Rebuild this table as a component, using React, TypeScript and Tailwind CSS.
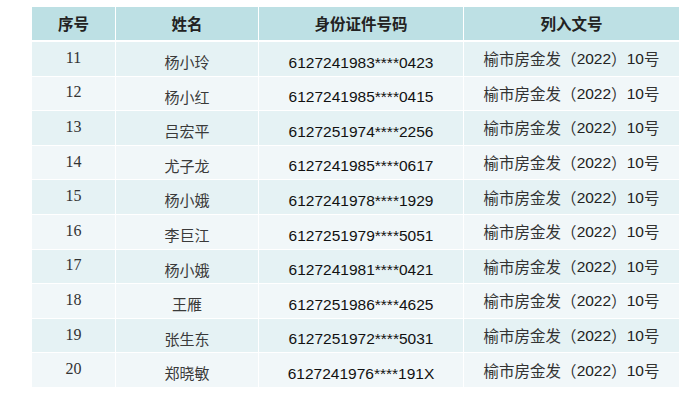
const rows = [
  { no: "11", name: "杨小玲", id: "6127241983****0423" },
  { no: "12", name: "杨小红", id: "6127241985****0415" },
  { no: "13", name: "吕宏平", id: "6127251974****2256" },
  { no: "14", name: "尤子龙", id: "6127241985****0617" },
  { no: "15", name: "杨小娥", id: "6127241978****1929" },
  { no: "16", name: "李巨江", id: "6127251979****5051" },
  { no: "17", name: "杨小娥", id: "6127241981****0421" },
  { no: "18", name: "王雁", id: "6127251986****4625" },
  { no: "19", name: "张生东", id: "6127251972****5031" },
  { no: "20", name: "郑晓敏", id: "6127241976****191X" },
];

const cjk = "font-['Noto_Sans_CJK_SC',sans-serif]";
const arial = "font-['Liberation_Sans','Noto_Sans_CJK_SC',sans-serif]";
const serif = "font-['Liberation_Serif','Noto_Sans_CJK_SC',serif]";

export default function App() {
  return (
    <div className="w-[700px] h-[395px] bg-white pt-[7px] pl-[32px]">
      <div className="w-[644px] bg-white flex flex-col">
        <div className="grid grid-cols-[83px_142px_204px_215px] gap-x-px h-[33px] mb-[2px]">
          {["序号", "姓名", "身份证件号码", "列入文号"].map((h) => (
            <div
              key={h}
              className={`bg-[#bde0e4] flex items-center justify-center text-[15.5px] font-bold text-[#222] ${cjk}`}
            >
              {h}
            </div>
          ))}
        </div>
        <div className="flex flex-col gap-y-px">
          {rows.map((r, i) => (
            <div
              key={r.no}
              className={`grid grid-cols-[83px_142px_204px_215px] gap-x-px h-[33.6px] ${
                i % 2 === 0 ? "[&>div]:bg-[#e5f2f4]" : "[&>div]:bg-[#f1f7f9]"
              }`}
            >
              <div className={`flex items-center justify-center pb-[2px] text-[16px] text-[#333] ${serif}`}>
                {r.no}
              </div>
              <div className={`flex items-center justify-center pt-[7px] text-[15px] text-[#3a3a3a] ${cjk}`}>
                {r.name}
              </div>
              <div className={`flex items-center justify-center pt-[7px] text-[15.5px] text-[#111] ${arial}`}>
                {r.id}
              </div>
              <div className={`flex items-center justify-center text-[15.5px] text-[#333] ${arial}`}>
                <span className={cjk}>榆市房金发（</span>
                <span className="text-[#222]">2022</span>
                <span className={cjk}>）</span>
                <span className="text-[#222]">10</span>
                <span className={cjk}>号</span>
              </div>
            </div>
          ))}
        </div>
      </div>
    </div>
  );
}
